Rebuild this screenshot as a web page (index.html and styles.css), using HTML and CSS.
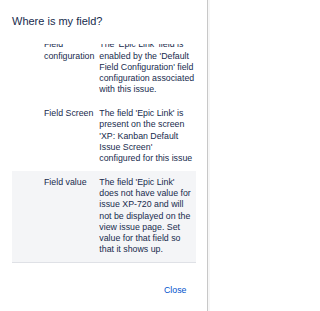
FILE: index.html
```html
<!DOCTYPE html>
<html lang="en">
<head>
<meta charset="utf-8">
<title>Where is my field?</title>
<link rel="stylesheet" href="styles.css">
</head>
<body>
<div class="page">
  <div class="dialog">
    <header class="head">
      <h2 class="title">Where is my field?</h2>
    </header>
    <div class="body">
      <div class="rows">
        <div class="row">
          <div class="label">Field configuration</div>
          <div class="desc">The 'Epic Link' field is enabled by the 'Default Field Configuration' field configuration associated with this issue.</div>
        </div>
        <div class="row">
          <div class="label">Field Screen</div>
          <div class="desc">The field 'Epic Link' is present on the screen 'XP: Kanban Default Issue Screen' configured for this issue</div>
        </div>
        <div class="row row-warn">
          <div class="label">Field value</div>
          <div class="desc">The field 'Epic Link' does not have value for issue XP-720 and will not be displayed on the view issue page. Set value for that field so that it shows up.</div>
        </div>
      </div>
    </div>
    <footer class="foot">
      <button class="close" type="button">Close</button>
    </footer>
  </div>
  <div class="scrollbar"></div>
</div>
</body>
</html>
```

FILE: styles.css
```css
html, body {
  margin: 0;
  padding: 0;
  background: #ffffff;
}

body {
  font-family: "Liberation Sans", Arial, Helvetica, sans-serif;
  color: #172b4d;
}

.page {
  display: flex;
  width: 210px;
  height: 311px;
  overflow: hidden;
}

.dialog {
  flex: 1;
  display: flex;
  flex-direction: column;
  background: #ffffff;
}

.head {
  height: 44px;
  box-sizing: border-box;
  padding: 15px 12px 0;
}

.title {
  margin: 0;
  font-size: 11px;
  line-height: 13px;
  font-weight: 400;
  color: #172b4d;
}

.body {
  height: 226px;
  overflow: hidden;
  padding: 0 0 0 12px;
}

.rows {
  margin-top: -11px;
  width: 183.8px;
}

.row {
  display: grid;
  grid-template-columns: 55.3px 96.5px;
  padding: 6.25px 0 6.25px 32px;
  font-size: 8.8px;
  line-height: 11.25px;
}

.row-warn {
  background: #f4f5f7;
  border-bottom: 1px solid #dfe1e6;
}

.label {
  color: #172b4d;
}

.desc {
  color: #172b4d;
}

.foot {
  flex: 1;
  display: flex;
  justify-content: flex-end;
  align-items: flex-start;
  padding: 10px 14.5px 0 0;
}

.close {
  font-family: "Liberation Sans", Arial, Helvetica, sans-serif;
  font-size: 8.8px;
  line-height: 21px;
  height: 21px;
  padding: 0 6px;
  margin: 0;
  border: 0;
  background: transparent;
  color: #0052cc;
  cursor: pointer;
}

.scrollbar {
  width: 2px;
  border-left: 1px solid #c8c8c8;
  background: #f7f7f7;
}
```
